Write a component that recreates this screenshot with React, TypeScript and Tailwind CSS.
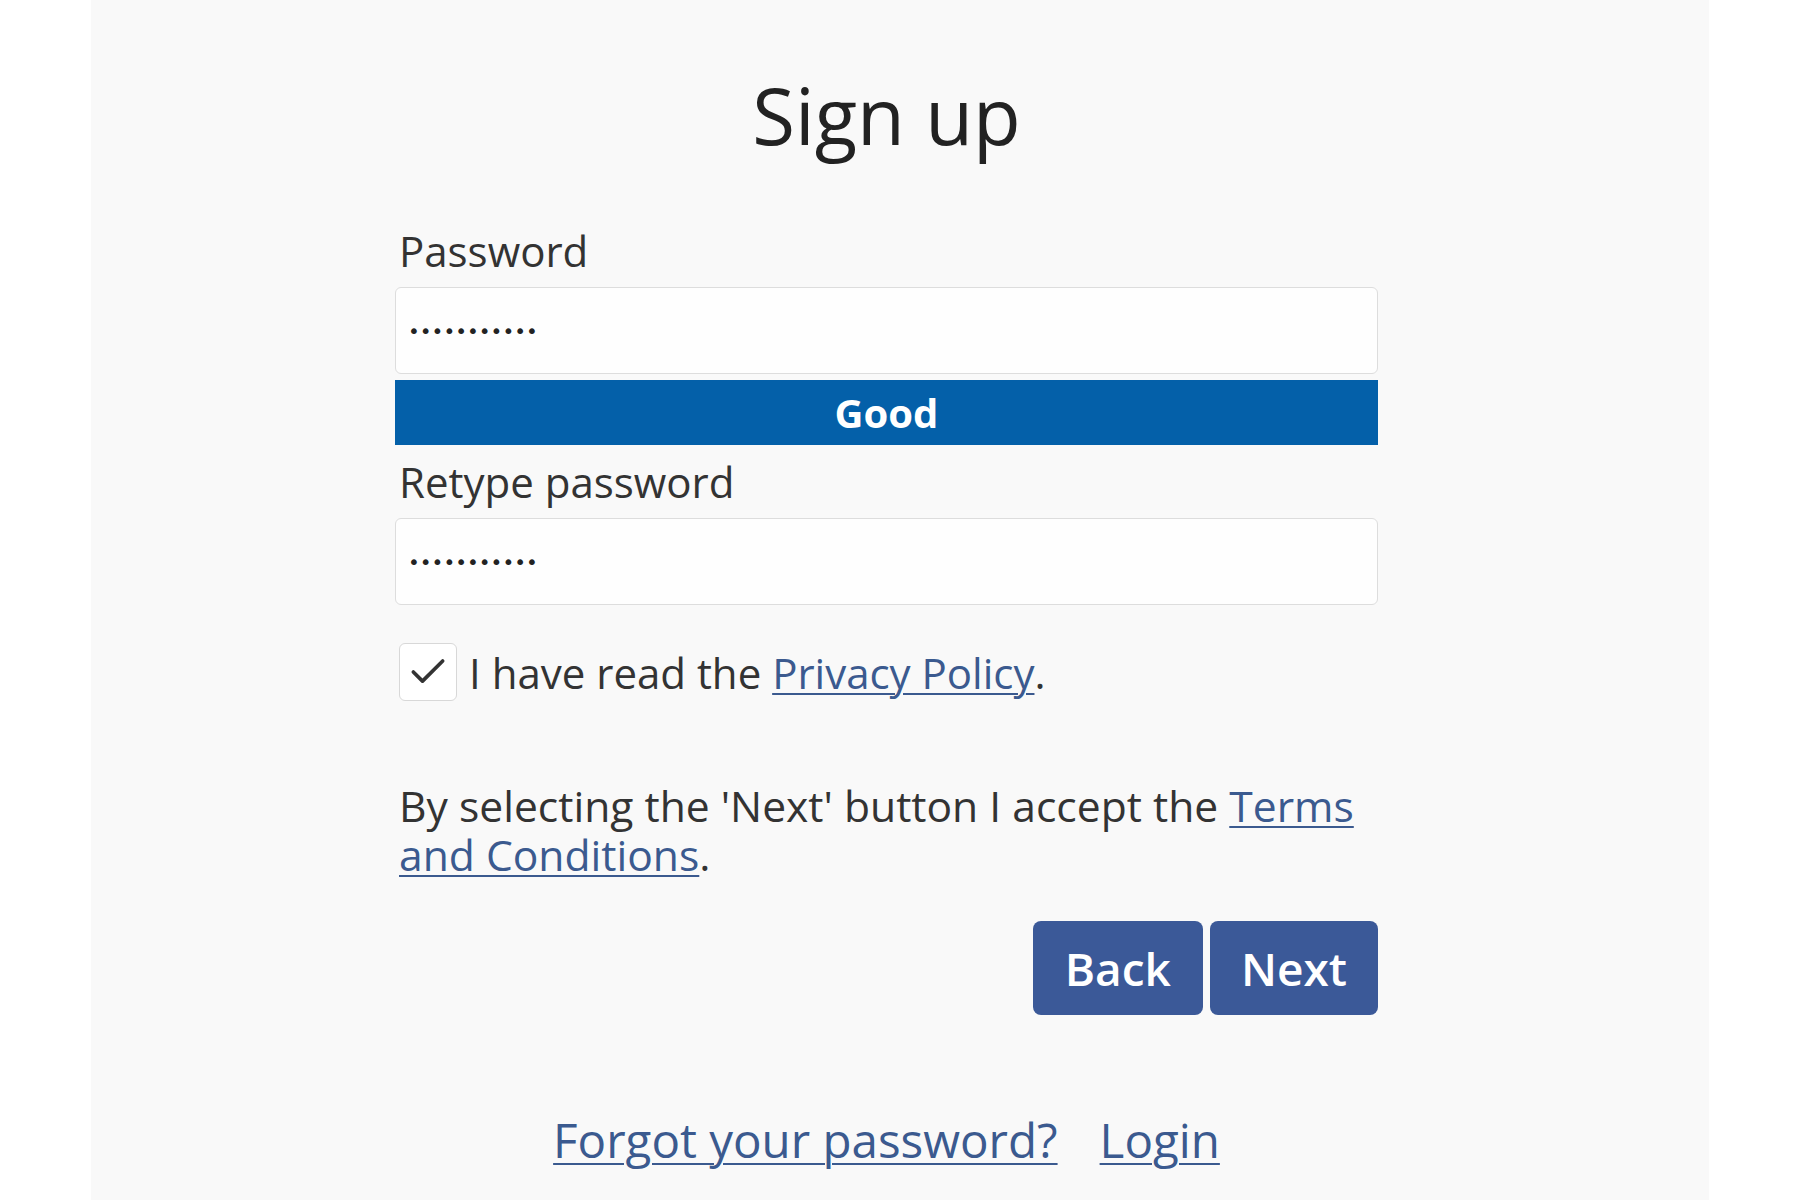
import React from 'react';
import { Check } from 'lucide-react';

const font = { fontFamily: '"Open Sans", "Noto Sans", sans-serif' };

const PasswordField: React.FC<{ label: string; className?: string }> = ({ label, className }) => {
  return (
    <div className={className}>
      <label className="block pl-[4px] text-[42px] leading-[49px] text-[#333]">{label}</label>
      <div className="mt-[12px] h-[87px] rounded-[6px] border border-[#dddddd] bg-[#fefefe] flex items-center pl-[12px]">
        <span className="text-[20px] text-[#222] font-['DejaVu_Sans',sans-serif] leading-none">
          •••••••••••
        </span>
      </div>
    </div>
  );
};

export default function App() {
  return (
    <div className="min-h-screen bg-white flex justify-center" style={font}>
      <div className="w-[1618px] min-h-[1200px] bg-[#f9f9f9] flex justify-center pr-[27px] pt-[76px]">
        <div className="w-[983px] flex flex-col">
          <h1 className="text-center text-[78px] leading-[78px] text-[#222]">Sign up</h1>

          <PasswordField label="Password" className="mt-[72px]" />

          <div className="mt-[6px] h-[65px] bg-[#0460a9] flex items-center justify-center">
            <span className="text-[40px] font-bold text-white">Good</span>
          </div>

          <PasswordField label="Retype password" className="mt-[12px]" />

          <div className="mt-[38px] pl-[4px] flex items-center gap-[12px]">
            <div className="w-[58px] h-[58px] rounded-[6px] border border-[#d8d8d8] bg-white flex items-center justify-center">
              <Check size={44} strokeWidth={2} className="text-[#333]" />
            </div>
            <p className="text-[42px] leading-[49px] text-[#333]">
              I have read the{' '}
              <a href="#" className="text-[#3b5a8f] underline decoration-2 underline-offset-[4px]">
                Privacy Policy
              </a>
              .
            </p>
          </div>

          <p className="mt-[80px] pl-[4px] text-[42.6px] leading-[49px] text-[#333]">
            By selecting the 'Next' button I accept the{' '}
            <a href="#" className="text-[#3b5a8f] underline decoration-2 underline-offset-[4px]">
              Terms and Conditions
            </a>
            .
          </p>

          <div className="mt-[42px] flex justify-end gap-[7px]">
            <button className="h-[94px] px-[32px] rounded-[8px] bg-[#3b5998] text-white text-[46px] font-semibold">
              Back
            </button>
            <button className="h-[94px] px-[31px] rounded-[8px] bg-[#3b5998] text-white text-[46px] font-semibold">
              Next
            </button>
          </div>

          <div className="mt-[97px] flex justify-center gap-[42px] text-[47.5px] leading-[56px]">
            <a href="#" className="text-[#3b5a8f] underline decoration-2 underline-offset-[5px]">
              Forgot your password?
            </a>
            <a href="#" className="text-[#3b5a8f] underline decoration-2 underline-offset-[5px]">
              Login
            </a>
          </div>
        </div>
      </div>
    </div>
  );
}
